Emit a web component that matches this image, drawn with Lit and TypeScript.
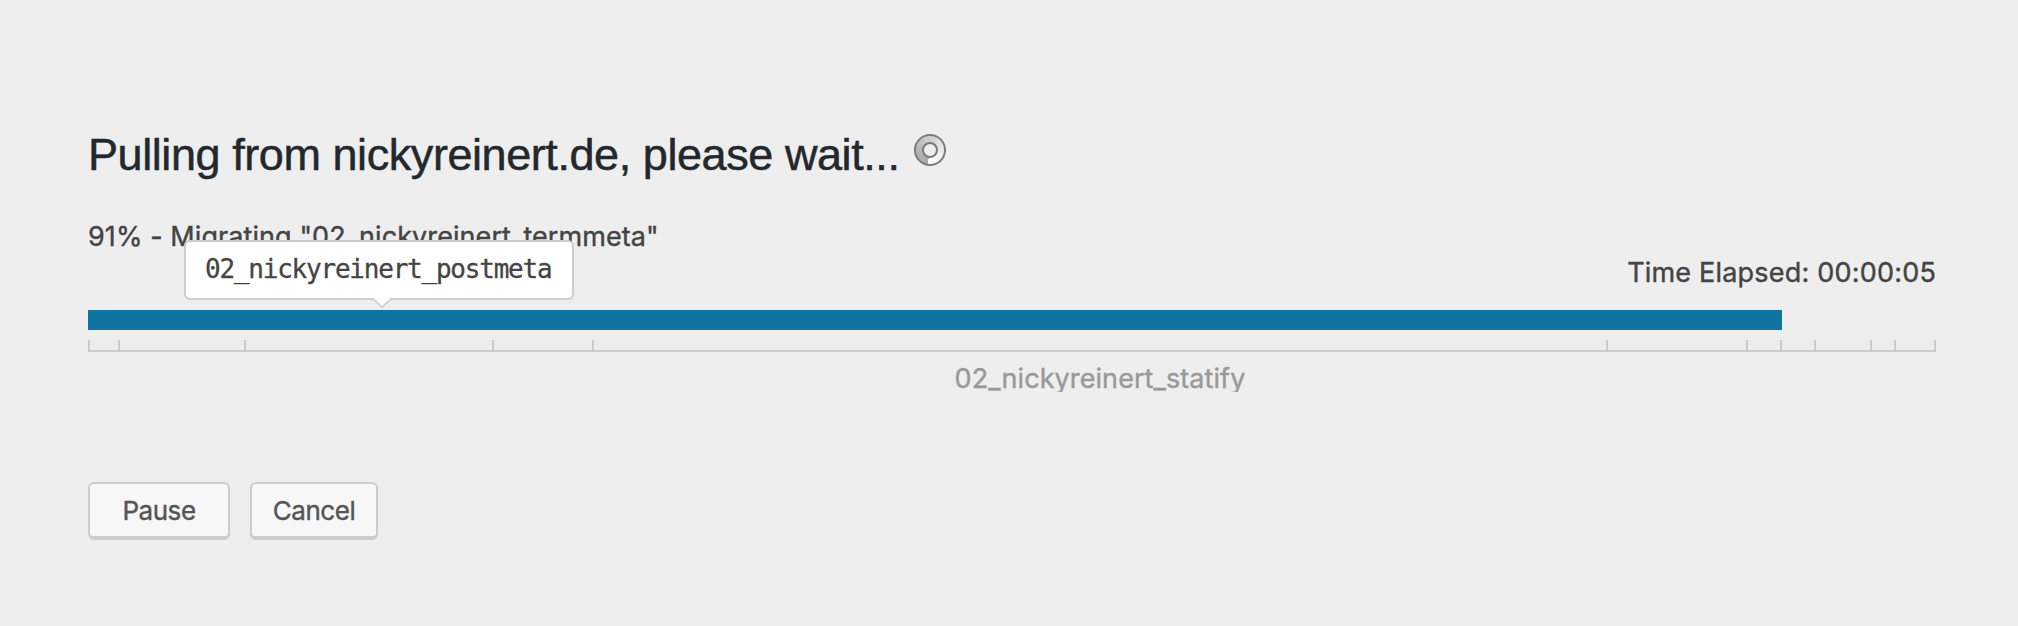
import { LitElement, html, css } from "lit";
import { customElement, property } from "lit/decorators.js";

interface Table {
  name: string;
  size: number;
  labelled?: boolean;
}

// Sizes are the widths of the segments along the 1848px track.
const TABLES: Table[] = [
  { name: "02_nickyreinert_commentmeta", size: 32 },
  { name: "02_nickyreinert_options", size: 126 },
  { name: "02_nickyreinert_postmeta", size: 248 },
  { name: "02_nickyreinert_posts", size: 100 },
  { name: "02_nickyreinert_statify", size: 1014, labelled: true },
  { name: "02_nickyreinert_links", size: 140 },
  { name: "02_nickyreinert_termmeta", size: 34 },
  { name: "02_nickyreinert_terms", size: 34 },
  { name: "02_nickyreinert_term_taxonomy", size: 56 },
  { name: "02_nickyreinert_usermeta", size: 24 },
  { name: "02_nickyreinert_users", size: 40 },
];

@customElement("progress-spinner")
export class ProgressSpinner extends LitElement {
  static styles = css`
    :host { display: block; width: 32px; height: 32px; }
    .disc {
      box-sizing: border-box;
      width: 32px;
      height: 32px;
      border-radius: 50%;
      border: 2px solid #7b7b7b;
      background: conic-gradient(from 190deg, #a8a8a8, #b9b9b9 25%, #d2d2d2 50%, #ededed 75%, #fff 100%);
      display: grid;
      place-items: center;
    }
    .hole {
      box-sizing: border-box;
      width: 16px;
      height: 16px;
      border-radius: 50%;
      border: 2px solid #7b7b7b;
      background: #eee;
    }
  `;
  render() {
    return html`<div class="disc"><div class="hole"></div></div>`;
  }
}

@customElement("table-track")
export class TableTrack extends LitElement {
  @property({ attribute: false }) tables: Table[] = [];
  static styles = css`
    :host { display: block; }
    .track { display: flex; }
    .segment {
      box-sizing: border-box;
      height: 52px;
      min-width: 0;
      overflow: hidden;
      text-align: center;
    }
    .rule {
      box-sizing: border-box;
      height: 12px;
      border-right: 2px solid #ccc;
      border-bottom: 2px solid #ccc;
    }
    .segment:first-child .rule { border-left: 2px solid #ccc; }
    .label {
      font-size: 27px;
      line-height: 32px;
      padding: 11px 2px 0 0;
      color: #999;
      white-space: nowrap;
      letter-spacing: 0.08px;
      -webkit-text-stroke: 0.4px #999;
    }
  `;
  render() {
    return html`<div class="track">
      ${this.tables.map(
        (t) => html`<div class="segment" style="width:${t.size}px">
          <div class="rule"></div>
          ${t.labelled ? html`<div class="label">${t.name}</div>` : null}
        </div>`
      )}
    </div>`;
  }
}

@customElement("app-root")
export class AppRoot extends LitElement {
  @property({ type: Number }) done = 1694;
  static styles = css`
    :host {
      display: block;
      box-sizing: border-box;
      height: 626px;
      overflow: hidden;
      padding: 128px 82px 0 88px;
      background: #eee;
      color: #444;
      font-family: Inter, sans-serif;
    }
    .head { display: flex; align-items: flex-start; height: 82px; }
    .title {
      margin: 0;
      font: 400 45px/54px "Liberation Sans", sans-serif;
      color: #23282d;
      white-space: nowrap;
      letter-spacing: -0.43px;
      -webkit-text-stroke: 0.5px #23282d;
    }
    .spinner { margin: 6px 0 0 15px; }
    .status { height: 50px; font-size: 27px; line-height: 54px; white-space: nowrap; letter-spacing: 0.08px; -webkit-text-stroke: 0.4px #444; }
    .elapsed { height: 50px; font-size: 27px; line-height: 26px; text-align: right; white-space: nowrap; letter-spacing: 0.2px; -webkit-text-stroke: 0.4px #444; }
    .meter { position: relative; height: 20px; margin-bottom: 10px; }
    .fill { height: 20px; background: #0f74a1; }
    .tip {
      position: absolute;
      left: 96px;
      top: -70px;
      box-sizing: border-box;
      width: 390px;
      height: 60px;
      border: 2px solid #ccc;
      border-radius: 6px;
      background: #fff;
      padding-left: 19px;
      font: 26px/54px "DejaVu Sans Mono", monospace;
      letter-spacing: -1.22px;
      -webkit-text-stroke: 0.3px #444;
      white-space: nowrap;
    }
    .arrow { position: absolute; left: 187px; top: 56px; display: block; }
    .actions { display: flex; gap: 20px; margin-top: 90px; }
    .button {
      box-sizing: border-box;
      height: 58px;
      border: 2px solid #ccc;
      border-bottom-width: 4px;
      border-radius: 6px;
      background: #f7f7f7;
      color: #555;
      font: 26px/54px Inter, sans-serif;
      letter-spacing: -0.45px;
      -webkit-text-stroke: 0.4px #555;
      padding: 0;
      text-align: center;
    }
    .pause { width: 142px; }
    .cancel { width: 128px; }
  `;
  render() {
    return html`
      <div class="head">
        <h2 class="title">Pulling from nickyreinert.de, please wait...</h2>
        <progress-spinner class="spinner"></progress-spinner>
      </div>
      <div class="status">91% - Migrating "02_nickyreinert_termmeta"</div>
      <div class="elapsed">Time Elapsed: 00:00:05</div>
      <div class="meter">
        <div class="fill" style="width:${this.done}px"></div>
        <div class="tip">
          02_nickyreinert_postmeta
          <svg class="arrow" width="18" height="12" viewBox="0 0 18 12">
            <path d="M0 0H18L9 9Z" fill="#fff" />
            <path d="M0 1L9 9.2L18 1" fill="none" stroke="#ccc" stroke-width="1.6" />
          </svg>
        </div>
      </div>
      <table-track .tables=${TABLES}></table-track>
      <div class="actions">
        <button class="button pause">Pause</button>
        <button class="button cancel">Cancel</button>
      </div>
    `;
  }
}
